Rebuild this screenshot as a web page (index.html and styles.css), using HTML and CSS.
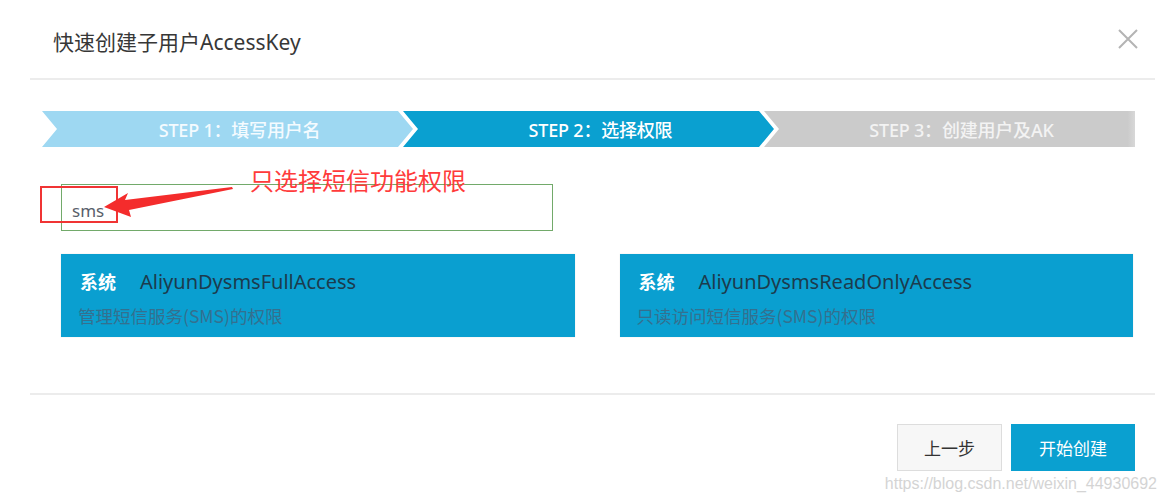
FILE: index.html
```html
<!DOCTYPE html>
<html lang="zh-CN">
<head>
<meta charset="utf-8">
<title>快速创建子用户AccessKey</title>
<link rel="stylesheet" href="styles.css">
</head>
<body>
<div class="modal">
  <header class="modal-head">
    <h1 class="modal-title">快速创建子用户AccessKey</h1>
    <button class="close" aria-label="关闭">
      <svg width="20" height="20" viewBox="0 0 20 20"><path d="M1 1L19 19M19 1L1 19" stroke="#b4b4b4" stroke-width="2" fill="none"/></svg>
    </button>
  </header>

  <main class="modal-body">
    <div class="steps">
      <div class="step step-done">STEP 1：填写用户名</div>
      <div class="step step-active">STEP 2：选择权限</div>
      <div class="step step-todo">STEP 3：创建用户及AK</div>
    </div>

    <div class="search-wrap">
      <div class="search">sms</div>
      <div class="mark-box"></div>
      <svg class="mark-arrow" width="180" height="40" viewBox="0 0 180 40">
        <polygon points="43,23 67,9 64,16 171,3 172,5 68,26 70,33" fill="#f42c2c"/>
      </svg>
      <div class="mark-text">只选择短信功能权限</div>
    </div>

    <div class="cards">
      <div class="card">
        <div class="card-top"><span class="tag">系统</span><span class="name">AliyunDysmsFullAccess</span></div>
        <div class="desc">管理短信服务(SMS)的权限</div>
      </div>
      <div class="card">
        <div class="card-top"><span class="tag">系统</span><span class="name">AliyunDysmsReadOnlyAccess</span></div>
        <div class="desc">只读访问短信服务(SMS)的权限</div>
      </div>
    </div>
  </main>

  <footer class="modal-foot">
    <button class="btn btn-prev">上一步</button>
    <button class="btn btn-primary">开始创建</button>
  </footer>

  <div class="watermark">https://blog.csdn.net/weixin_44930692</div>
</div>
</body>
</html>
```

FILE: styles.css
```css
* { box-sizing: border-box; }

html, body {
  margin: 0;
  padding: 0;
  background: #ffffff;
}

body {
  font-family: "Noto Sans", "Noto Sans CJK SC", sans-serif;
  color: #333;
}

.modal {
  position: relative;
  width: 1165px;
  height: 502px;
  overflow: hidden;
}

.modal-head {
  display: flex;
  align-items: flex-start;
  justify-content: space-between;
  height: 80px;
  margin: 0 10px 0 30px;
  border-bottom: 2px solid #ececec;
}

.modal-title {
  margin: 28px 0 0 23px;
  font-size: 21px;
  line-height: 28px;
  font-weight: 400;
  color: #373737;
}

.close {
  margin: 29px 17px 0 0;
  padding: 0;
  width: 20px;
  height: 20px;
  border: 0;
  background: none;
  display: block;
}
.close svg { display: block; }

.modal-body {
  padding: 31px 30px 0 42px;
}

.steps {
  display: flex;
  height: 36px;
}

.step {
  flex: 1;
  height: 36px;
  display: flex;
  align-items: center;
  justify-content: center;
  padding-left: 24px;
  font-size: 18px;
  font-weight: 500;
  letter-spacing: -0.2px;
  color: #ffffff;
  clip-path: polygon(0 0, calc(100% - 15px) 0, 100% 50%, calc(100% - 15px) 100%, 0 100%, 15px 50%);
}
.step + .step { margin-left: -10px; }

.step-done { background: #9ed8f2; color: #f4fbff; }
.step-active { background: #0aa0d0; }
.step-todo {
  background: linear-gradient(to right, #cbcbcb 98%, #d8d8d8 100%);
  color: #f3f3f3;
  clip-path: polygon(0 0, 100% 0, 100% 100%, 0 100%, 15px 50%);
}

.search-wrap {
  position: relative;
  margin: 37px 0 0 19px;
  width: 492px;
}

.search {
  height: 47px;
  border: 1px solid #72aa6a;
  display: flex;
  align-items: center;
  padding: 5px 0 0 10px;
  font-size: 17px;
  color: #58606a;
}

.mark-box {
  position: absolute;
  left: -21px;
  top: 2px;
  width: 78px;
  height: 37px;
  border: 2px solid #f03434;
}

.mark-arrow {
  position: absolute;
  left: 0;
  top: 0;
  overflow: visible;
}

.mark-text {
  position: absolute;
  left: 189px;
  top: -18px;
  font-size: 24px;
  line-height: 28px;
  color: #ff3b3b;
  white-space: nowrap;
  font-family: "Noto Sans CJK SC", sans-serif;
}

.cards {
  display: grid;
  grid-template-columns: 1fr 1fr;
  gap: 45px;
  margin: 23px 2px 0 19px;
}

.card {
  height: 83px;
  background: #0a9fd0;
  padding: 14px 17px 0 17px;
  box-shadow: 0 0 1px rgba(0, 0, 0, 0.15);
}

.card-top {
  display: flex;
  align-items: center;
  height: 26px;
}

.tag {
  margin-left: 2px;
  font-size: 18px;
  font-weight: 700;
  color: #ffffff;
  font-family: "Noto Sans CJK SC", sans-serif;
}

.name {
  margin-left: 24px;
  font-size: 20px;
  color: #1c3b4d;
}

.desc {
  margin-top: 10px;
  font-size: 17.5px;
  line-height: 24px;
  color: #34708f;
  font-family: "Noto Sans CJK SC", sans-serif;
}

.modal-foot {
  display: flex;
  justify-content: flex-end;
  gap: 9px;
  margin: 56px 10px 0 30px;
  padding: 29px 20px 0 0;
  border-top: 2px solid #ececec;
}

.btn {
  height: 47px;
  font-family: "Noto Sans CJK SC", sans-serif;
  font-size: 17px;
  border-radius: 0;
  padding: 0;
}

.btn-prev {
  width: 105px;
  background: #f7f7f7;
  border: 1px solid #dddddd;
  color: #333333;
}

.btn-primary {
  width: 124px;
  background: #0aa0d0;
  border: 1px solid #0aa0d0;
  color: #ffffff;
}

.watermark {
  position: absolute;
  right: 8px;
  top: 474px;
  font-family: "Liberation Sans", Arial, sans-serif;
  font-size: 16px;
  line-height: 20px;
  color: #d4d4d4;
  white-space: nowrap;
}
```
